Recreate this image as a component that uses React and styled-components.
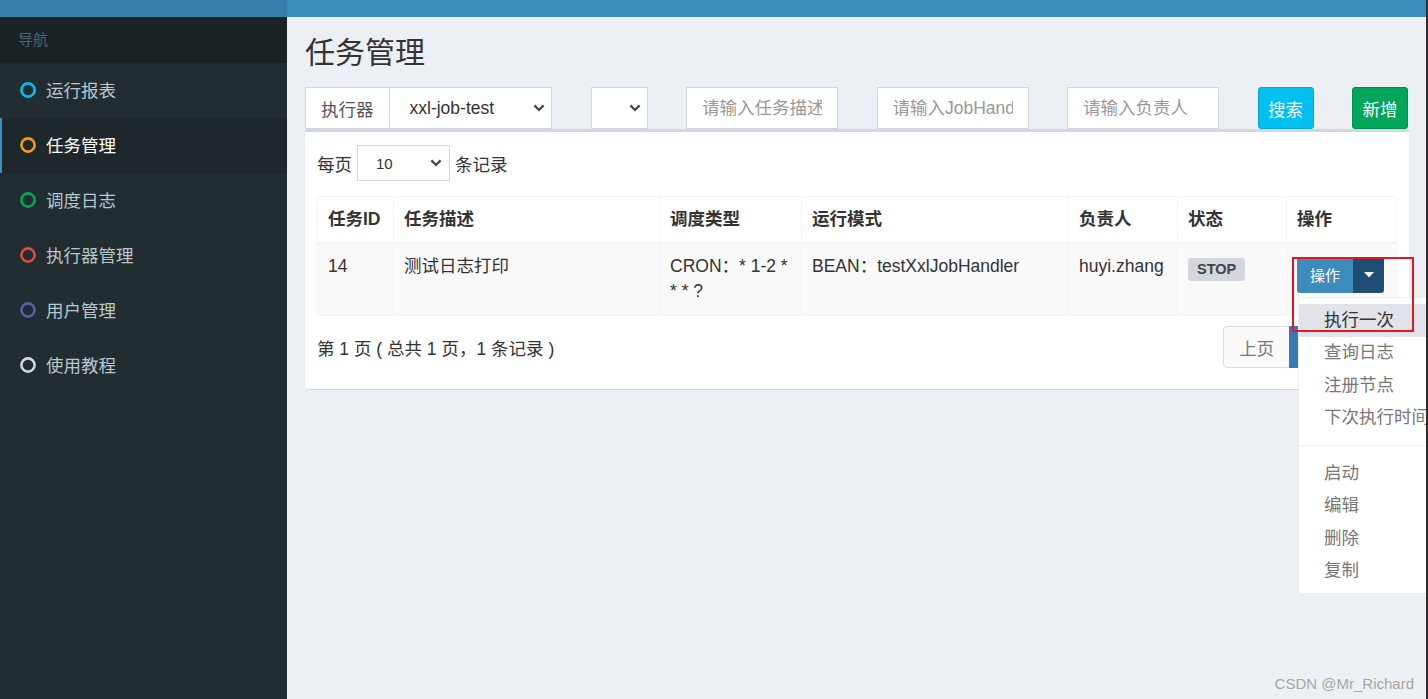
import React from 'react';
import styled, { createGlobalStyle } from 'styled-components';

const GlobalStyle = createGlobalStyle`
  html, body {
    margin: 0;
    padding: 0;
    height: 100%;
    overflow: hidden;
  }
  body {
    font-family: 'Liberation Sans', Arial, 'Noto Sans CJK SC', sans-serif;
    font-size: 17.5px;
    color: #333;
    background: #ecf0f5;
  }
  * {
    box-sizing: border-box;
  }
`;

const Wrapper = styled.div`
  position: relative;
  display: flex;
  width: 1428px;
  height: 699px;
  overflow: hidden;
  border-right: 2px solid #2d2d2d;
  background: #ecf0f5;
`;

/* sidebar */
const Sidebar = styled.aside`
  width: 287px;
  flex-shrink: 0;
  display: flex;
  flex-direction: column;
  background: #222d32;
`;

const LogoBar = styled.div`
  height: 17px;
  background: #367fa9;
`;

const NavHeader = styled.div`
  height: 46px;
  display: flex;
  align-items: center;
  padding: 0 0 3px 18px;
  background: #1a2226;
  color: #4b646f;
  font-size: 15px;
`;

const NavItem = styled.div`
  height: 55px;
  display: flex;
  align-items: center;
  padding: 0 0 2px 18px;
  border-left: 2px solid ${p => (p.$active ? '#3c8dbc' : 'transparent')};
  background: ${p => (p.$active ? '#1e282c' : 'transparent')};
  color: ${p => (p.$active ? '#fff' : '#b8c7ce')};
  font-size: 17.5px;

  svg {
    margin-right: 10px;
    flex-shrink: 0;
  }
`;

const Ring = ({ color }) => (
  <svg width="16" height="16" viewBox="0 0 16 16">
    <circle cx="8" cy="8" r="6.6" fill="none" stroke={color} strokeWidth="2.6" />
  </svg>
);

/* main */
const Main = styled.main`
  flex: 1;
  min-width: 0;
  display: flex;
  flex-direction: column;
`;

const TopBar = styled.div`
  height: 17px;
  flex-shrink: 0;
  background: #3c8dbc;
`;

const Content = styled.div`
  padding: 19px 17px 0 18px;
`;

const Title = styled.h1`
  margin: 0;
  font-size: 30px;
  font-weight: 400;
  line-height: 33px;
  color: #333;
`;

const FilterRow = styled.div`
  display: flex;
  gap: 38.5px;
  margin-top: 18px;
  height: 42px;
`;

const InputGroup = styled.div`
  display: flex;
  width: 247px;
`;

const Addon = styled.span`
  display: flex;
  align-items: center;
  padding: 0 15px;
  background: #fff;
  border: 1px solid #d2d6de;
  border-right: none;
  color: #555;
`;

const SelectBox = styled.div`
  flex: ${p => (p.$w ? 'none' : '1')};
  width: ${p => (p.$w ? `${p.$w}px` : 'auto')};
  height: ${p => p.$h || 42}px;
  display: flex;
  align-items: center;
  justify-content: space-between;
  padding: 0 ${p => p.$pr || 6}px 0 ${p => p.$pl || 20}px;
  background: #fff;
  border: 1px solid #d2d6de;
  color: #333;
  font-size: ${p => p.$fs || 17.5}px;
`;

const TextInput = styled.input`
  width: 152px;
  height: 42px;
  padding: 0 15px;
  border: 1px solid #d2d6de;
  background: #fff;
  font: inherit;
  color: #555;
  outline: none;

  &::placeholder {
    color: #999;
  }
`;

const Button = styled.button`
  width: 56px;
  height: 42px;
  padding: 0;
  border: 1px solid ${p => p.$border};
  border-radius: 3px;
  background: ${p => p.$bg};
  color: #fff;
  font: inherit;
`;

const Chevron = () => (
  <svg width="12" height="8" viewBox="0 0 12 8">
    <path d="M1.4 1.4 L6 6 L10.6 1.4" fill="none" stroke="#444" strokeWidth="2.2" />
  </svg>
);

/* box */
const Box = styled.div`
  background: #fff;
  border-top: 3px solid #d2d6de;
  border-radius: 3px;
  box-shadow: 0 1px 1px rgba(0, 0, 0, 0.1);
  padding: 13px 12px 21px 12px;
`;

const LengthRow = styled.div`
  display: flex;
  align-items: center;
  gap: 5px;
  height: 36px;
`;

const Table = styled.table`
  width: 100%;
  margin-top: 15px;
  border-collapse: collapse;
  border: 1px solid #f4f4f4;

  th,
  td {
    border: 1px solid #f4f4f4;
    padding: 10px;
    line-height: 25px;
    text-align: left;
    vertical-align: top;
    white-space: nowrap;
  }

  th {
    font-weight: 700;
    border-bottom-width: 2px;
  }

  td {
    padding-bottom: 11px;
  }

  tbody tr {
    background: #f9f9f9;
  }
`;

const Label = styled.span`
  display: inline-block;
  margin-top: 4px;
  padding: 3px 9px 3px;
  border-radius: 3px;
  background: #d2d6de;
  color: #444;
  font-size: 14.5px;
  font-weight: 700;
  line-height: 17px;
`;

const BtnGroup = styled.div`
  position: relative;
  display: inline-flex;
  margin-top: 3px;
  z-index: 5;
`;

const OpButton = styled.span`
  display: flex;
  align-items: center;
  justify-content: center;
  height: 36px;
  width: ${p => p.$w}px;
  background: ${p => p.$bg};
  color: #fff;
  font-size: 15px;
  border-radius: ${p => p.$radius};
`;

const Caret = () => (
  <svg width="10" height="6" viewBox="0 0 10 6">
    <path d="M0 0 H10 L5 5.5 Z" fill="#fff" />
  </svg>
);

const Menu = styled.ul`
  position: absolute;
  left: 1px;
  top: calc(100% + 4px);
  width: 200px;
  margin: 0;
  padding: 6px 0;
  list-style: none;
  background: #fff;
  border: 1px solid #eee;
  border-radius: 4px;
`;

const MenuItem = styled.li`
  padding: 3.75px 25px;
  line-height: 25px;
  color: ${p => (p.$hover ? '#333' : '#777')};
  background: ${p => (p.$hover ? '#e1e3e9' : 'transparent')};
  white-space: nowrap;
`;

const Divider = styled.li`
  height: 1px;
  margin: 11px 0;
  background: #eee;
`;

const Highlight = styled.div`
  position: absolute;
  left: -5px;
  top: 0;
  width: 122px;
  height: 75px;
  border: 2px solid #e5161f;
  pointer-events: none;
  z-index: 6;
`;

const Footer = styled.div`
  display: flex;
  align-items: center;
  justify-content: space-between;
  margin-top: 10px;
  height: 42px;
`;

const Pager = styled.div`
  display: flex;
`;

const PageLink = styled.span`
  display: flex;
  align-items: center;
  height: 42px;
  padding: 0 15px;
  border: 1px solid ${p => (p.$active ? '#337ab7' : '#ddd')};
  margin-left: -1px;
  background: ${p => (p.$active ? '#337ab7' : '#fafafa')};
  color: ${p => (p.$active ? '#fff' : '#777')};
  border-radius: ${p => p.$radius || '0'};
`;

const Watermark = styled.div`
  position: absolute;
  right: 12px;
  bottom: 7px;
  font-size: 15px;
  color: #a2a2a2;
  text-shadow: 0 0 1px #fff;
`;

const navItems = [
  { label: '运行报表', color: '#00c0ef' },
  { label: '任务管理', color: '#f39c12', active: true },
  { label: '调度日志', color: '#00a65a' },
  { label: '执行器管理', color: '#dd4b39' },
  { label: '用户管理', color: '#605ca8' },
  { label: '使用教程', color: '#d2d6de' },
];

const columns = [
  { title: '任务ID', width: 76 },
  { title: '任务描述', width: 266 },
  { title: '调度类型', width: 142 },
  { title: '运行模式', width: 267 },
  { title: '负责人', width: 109 },
  { title: '状态', width: 109 },
  { title: '操作', width: 110 },
];

export default function App() {
  return (
    <Wrapper>
      <GlobalStyle />
      <Sidebar>
        <LogoBar />
        <NavHeader>导航</NavHeader>
        {navItems.map(item => (
          <NavItem key={item.label} $active={item.active}>
            <Ring color={item.color} />
            {item.label}
          </NavItem>
        ))}
      </Sidebar>

      <Main>
        <TopBar />
        <Content>
          <Title>任务管理</Title>

          <FilterRow>
            <InputGroup>
              <Addon>执行器</Addon>
              <SelectBox>
                xxl-job-test
                <Chevron />
              </SelectBox>
            </InputGroup>
            <SelectBox $w={57} $pr={6}>
              <span />
              <Chevron />
            </SelectBox>
            <TextInput placeholder="请输入任务描述" />
            <TextInput placeholder="请输入JobHandler" />
            <TextInput placeholder="请输入负责人" />
            <Button $bg="#00c0ef" $border="#00acd6">搜索</Button>
            <Button $bg="#00a65a" $border="#008d4c">新增</Button>
          </FilterRow>

          <Box>
            <LengthRow>
              每页
              <SelectBox $w={93} $h={36} $pl={18} $pr={7} $fs={15}>
                10
                <Chevron />
              </SelectBox>
              条记录
            </LengthRow>

            <Table>
              <colgroup>
                {columns.map(c => (
                  <col key={c.title} style={{ width: c.width }} />
                ))}
              </colgroup>
              <thead>
                <tr>
                  {columns.map(c => (
                    <th key={c.title}>{c.title}</th>
                  ))}
                </tr>
              </thead>
              <tbody>
                <tr>
                  <td>14</td>
                  <td>测试日志打印</td>
                  <td>
                    CRON：* 1-2 *
                    <br />* * ?
                  </td>
                  <td>BEAN：testXxlJobHandler</td>
                  <td>huyi.zhang</td>
                  <td>
                    <Label>STOP</Label>
                  </td>
                  <td>
                    <BtnGroup>
                      <OpButton $w={56} $bg="#3c8dbc" $radius="3px 0 0 3px">
                        操作
                      </OpButton>
                      <OpButton $w={31} $bg="#204d74" $radius="0 3px 3px 0">
                        <Caret />
                      </OpButton>
                      <Menu>
                        <MenuItem $hover>执行一次</MenuItem>
                        <MenuItem>查询日志</MenuItem>
                        <MenuItem>注册节点</MenuItem>
                        <MenuItem>下次执行时间</MenuItem>
                        <Divider />
                        <MenuItem>启动</MenuItem>
                        <MenuItem>编辑</MenuItem>
                        <MenuItem>删除</MenuItem>
                        <MenuItem>复制</MenuItem>
                      </Menu>
                      <Highlight />
                    </BtnGroup>
                  </td>
                </tr>
              </tbody>
            </Table>

            <Footer>
              <span>第 1 页 ( 总共 1 页，1 条记录 )</span>
              <Pager>
                <PageLink $radius="4px 0 0 4px">上页</PageLink>
                <PageLink $active>1</PageLink>
                <PageLink $radius="0 4px 4px 0">下页</PageLink>
              </Pager>
            </Footer>
          </Box>
        </Content>
      </Main>

      <Watermark>CSDN @Mr_Richard</Watermark>
    </Wrapper>
  );
}
